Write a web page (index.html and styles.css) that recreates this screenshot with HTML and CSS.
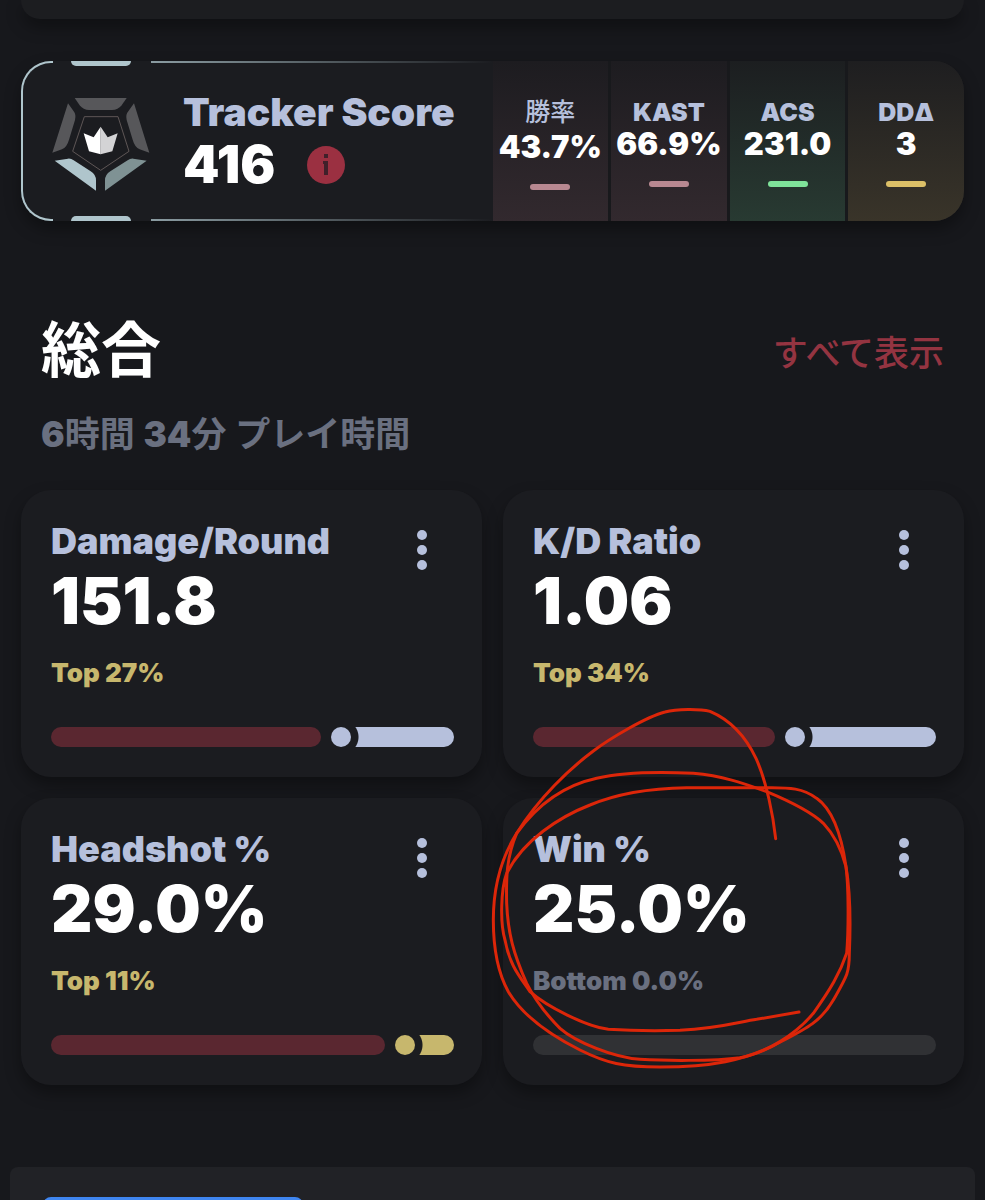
FILE: index.html
```
<!DOCTYPE html>
<html lang="ja">
<head>
    <meta charset="UTF-8">
    <meta name="viewport" content="width=device-width, initial-scale=1.0">
    <title>Tracker Score</title>
    <link rel="stylesheet" href="styles.css">
</head>
<body>
    <main class="page">
        <div class="previous-card"></div>

        <!-- Tracker Score -->
        <section class="score-card">
            <span class="tab tab-top"></span>
            <span class="tab tab-bottom"></span>
            <div class="score-main">
                <svg class="emblem" viewBox="36 38 294 282" aria-hidden="true">
                    <path d="M104 41H260L245 63Q234 77 216 77H147Q130 77 119 63Z" fill="#57575a"/>
                    <path d="M84 57L101 81Q109 91 105 107L87 166Q81 188 66 195L37 205Z" fill="#57575a"/>
                    <path d="M282 57L265 81Q256 91 260 107L278 166Q284 188 299 195L328 205Z" fill="#57575a"/>
                    <path d="M44 229L84 223Q93 222 101 228L152 261Q168 271 168 288V319Z" fill="#afc5cc"/>
                    <path d="M320 229L280 223Q271 222 263 228L211 261Q195 271 195 288V319Z" fill="#7f9294"/>
                    <path d="M133 97H234L267 201L182 258L98 201Z" fill="none" stroke="#5e5656" stroke-width="3"/>
                    <path d="M182 127L161 159L131 147L147 201L182 210Z" fill="#fff"/>
                    <path d="M182 127L203 159L233 147L217 201L182 210Z" fill="#d3d3d5"/>
                </svg>
                <div class="score-text">
                    <h2>Tracker Score</h2>
                    <div class="score-row">
                        <strong>416</strong>
                        <button class="info-btn" aria-label="Info">
                            <svg viewBox="0 0 38 38" aria-hidden="true">
                                <path d="M17 8H21V12H17ZM16 15H21V29H17V18H16Z" fill="#40202a"/>
                            </svg>
                        </button>
                    </div>
                </div>
            </div>
            <div class="score-stats">
                <div class="stat stat-red">
                    <span class="stat-label stat-label-ja">勝率</span>
                    <span class="stat-value">43.7%</span>
                    <span class="dash"></span>
                </div>
                <div class="stat stat-red">
                    <span class="stat-label">KAST</span>
                    <span class="stat-value">66.9%</span>
                    <span class="dash"></span>
                </div>
                <div class="stat stat-green">
                    <span class="stat-label">ACS</span>
                    <span class="stat-value">231.0</span>
                    <span class="dash"></span>
                </div>
                <div class="stat stat-yellow">
                    <span class="stat-label">DDΔ</span>
                    <span class="stat-value">3</span>
                    <span class="dash"></span>
                </div>
            </div>
        </section>

        <!-- Overview -->
        <header class="section-header">
            <h1>総合</h1>
            <a href="#">すべて表示</a>
        </header>
        <p class="playtime"><b>6</b>時間 <b>34</b>分 プレイ時間</p>

        <section class="cards">
            <article class="card">
                <button class="menu-btn" aria-label="Menu"><i></i><i></i><i></i></button>
                <h3>Damage/Round</h3>
                <div class="value">151.8</div>
                <div class="rank">Top 27%</div>
                <div class="bar">
                    <span class="fill" style="width: 67%"></span>
                    <span class="dot"></span>
                    <span class="rest"></span>
                </div>
            </article>
            <article class="card">
                <button class="menu-btn" aria-label="Menu"><i></i><i></i><i></i></button>
                <h3>K/D Ratio</h3>
                <div class="value">1.06</div>
                <div class="rank">Top 34%</div>
                <div class="bar">
                    <span class="fill" style="width: 60%"></span>
                    <span class="dot"></span>
                    <span class="rest"></span>
                </div>
            </article>
            <article class="card">
                <button class="menu-btn" aria-label="Menu"><i></i><i></i><i></i></button>
                <h3>Headshot %</h3>
                <div class="value">29.0%</div>
                <div class="rank">Top 11%</div>
                <div class="bar bar-gold">
                    <span class="fill" style="width: 83%"></span>
                    <span class="dot"></span>
                    <span class="rest"></span>
                </div>
            </article>
            <article class="card">
                <button class="menu-btn" aria-label="Menu"><i></i><i></i><i></i></button>
                <h3>Win %</h3>
                <div class="value">25.0%</div>
                <div class="rank rank-low">Bottom 0.0%</div>
                <div class="bar bar-empty"></div>
                <!-- Hand-drawn circle -->
                <svg class="scribble" viewBox="0 0 1200 1200" aria-hidden="true">
                    <path d="M887 446C880 380 860 275 828 205C790 125 735 83 690 64C660 56 590 56 555 66C500 80 390 145 340 183C270 235 175 325 110 430C60 510 40 600 40 690C40 800 60 860 85 905C130 980 220 1040 300 1080C380 1120 430 1131 540 1131C700 1131 790 1110 880 1067C970 1020 1020 1000 1060 930C1100 860 1108 850 1108 790C1112 700 1110 600 1098 530C1085 440 1060 360 1010 325C970 295 930 292 860 293H620C500 295 400 315 330 345C240 380 130 450 80 550C62 600 60 700 75 750C90 830 120 860 150 905C200 950 320 1010 385 1018C450 1022 560 1022 600 1021C720 1015 780 995 830 988L957 966"/>
                    <path d="M110 430C190 320 280 280 350 265C430 246 550 246 640 250C730 258 790 280 860 305C920 330 990 362 1030 400C1065 437 1085 480 1098 530C1106 590 1106 720 1100 790C1080 850 1050 900 1000 970C950 1030 860 1090 780 1103C700 1114 550 1112 480 1108C400 1102 285 1055 240 1015C195 970 165 930 140 880C100 790 84 730 80 640C78 560 80 500 110 430"/>
                </svg>
            </article>
        </section>

        <section class="next-panel">
            <button class="blue-btn" aria-label="Next"></button>
        </section>
    </main>
</body>
</html>
```
FILE: styles.css
```
* {
    box-sizing: border-box;
}

body {
    margin: 0;
    background-color: #17181c;
    color: #fff;
    font-family: Inter, "Noto Sans CJK JP", sans-serif;
    font-weight: 900;
}

h1, h2, h3, p {
    margin: 0;
}

button {
    border: none;
    padding: 0;
    background: none;
    cursor: pointer;
}

.page {
    height: 100vh;
    overflow: hidden;
    padding: 0 21px;
}

.previous-card {
    height: 19px;
    border-radius: 0 0 30px 30px;
    background-color: #1c1d20;
    box-shadow: 0 8px 16px rgba(0, 0, 0, 0.35);
}

/* Score card */
.score-card {
    position: relative;
    display: flex;
    margin-top: 42px;
    min-height: 160px;
    border-radius: 30px;
    background-color: #1b1c20;
    box-shadow: 0 8px 16px rgba(0, 0, 0, 0.35);
}

.score-card::before {
    content: "";
    position: absolute;
    left: 0;
    top: 0;
    bottom: 0;
    width: 30px;
    border: 2px solid #afc5cc;
    border-right: none;
    border-radius: 30px 0 0 30px;
}

.tab {
    position: absolute;
    left: 50px;
    width: 60px;
    height: 5px;
    background-color: #afc5cc;
}

.tab-top {
    top: 0;
    border-radius: 0 0 5px 5px;
}

.tab-bottom {
    bottom: 0;
    border-radius: 5px 5px 0 0;
}

.score-main {
    position: relative;
    flex: 1;
    display: flex;
    align-items: center;
    gap: 33px;
    padding-left: 31px;
}

.score-main::before,
.score-main::after {
    content: "";
    position: absolute;
    left: 130px;
    right: 0;
    height: 2px;
    background: linear-gradient(to right, #8b9ca2, transparent);
}

.score-main::before {
    top: 0;
}

.score-main::after {
    bottom: 0;
}

.emblem {
    width: 98px;
    height: 94px;
    margin-top: 6px;
}

.score-text h2 {
    color: #b6c0dc;
    font-size: 39px;
    font-weight: 900;
    line-height: 48px;
    white-space: nowrap;
}

.score-row {
    display: flex;
    align-items: center;
    gap: 32px;
}

.score-row strong {
    font-size: 52px;
    font-weight: 900;
    line-height: 58px;
}

.info-btn {
    width: 38px;
    height: 38px;
    border-radius: 50%;
    background-color: #9b3041;
}

.info-btn svg {
    display: block;
}

.score-stats {
    display: flex;
    gap: 3px;
    width: 50%;
    border-radius: 0 30px 30px 0;
    background-color: #18191c;
    overflow: hidden;
}

.stat {
    flex: 1;
    display: flex;
    flex-direction: column;
    align-items: center;
    padding-top: 36px;
}

.stat-red {
    background: linear-gradient(#1d1c20, #32292e);
    color: #b88891;
}

.stat-green {
    background: linear-gradient(#1c1e20, #283a32);
    color: #7fe39a;
}

.stat-yellow {
    background: linear-gradient(#1e1e20, #393429);
    color: #dcc067;
}

.stat-label {
    color: #b6c0dc;
    font-size: 25px;
    line-height: 30px;
}

.stat-label-ja {
    font-weight: 500;
    padding-bottom: 3px;
}

.stat-value {
    color: #fff;
    font-size: 31px;
    line-height: 34px;
}

.dash {
    width: 40px;
    height: 6px;
    margin-top: 20px;
    border-radius: 3px;
    background-color: currentColor;
}

/* Section header */
.section-header {
    display: flex;
    justify-content: space-between;
    align-items: center;
    margin-top: 85px;
    padding: 0 20px;
}

.section-header h1 {
    font-size: 60px;
    font-weight: 700;
    line-height: 88px;
}

.section-header a {
    color: #943441;
    font-size: 35px;
    font-weight: 500;
    text-decoration: none;
}

.playtime {
    margin-top: 14px;
    padding: 0 20px;
    color: #6a7080;
    font-size: 35px;
    font-weight: 600;
    line-height: 52px;
}

.playtime b {
    font-weight: 900;
}

/* Cards */
.cards {
    display: grid;
    grid-template-columns: 1fr 1fr;
    gap: 21px;
    margin-top: 30px;
}

.card {
    position: relative;
    padding: 30px 28px 30px 30px;
    border-radius: 30px;
    background-color: #1b1c20;
    box-shadow: 0 8px 16px rgba(0, 0, 0, 0.35);
}

.card h3 {
    color: #b6c0dc;
    font-size: 36px;
    font-weight: 900;
    line-height: 42px;
}

.value {
    font-size: 64px;
    line-height: 78px;
}

.rank {
    margin-top: 16px;
    color: #c7b76d;
    font-size: 26px;
    line-height: 34px;
}

.rank-low {
    color: #6a7080;
}

.menu-btn {
    position: absolute;
    top: 40px;
    right: 55px;
    display: flex;
    flex-direction: column;
    gap: 5px;
}

.menu-btn i {
    width: 10px;
    height: 10px;
    border-radius: 50%;
    background-color: #b6c0dc;
}

.bar {
    display: flex;
    height: 20px;
    margin-top: 37px;
    color: #b6c0dc;
}

.bar-gold {
    color: #c7b76d;
}

.bar-empty {
    border-radius: 10px;
    background-color: #303134;
}

.fill {
    border-radius: 10px;
    background-color: #5a2730;
}

.dot {
    width: 20px;
    margin-left: 10px;
    border-radius: 50%;
    background-color: currentColor;
}

/* the left end is cut out around the dot */
.rest {
    flex: 1;
    border-radius: 0 10px 10px 0;
    background: radial-gradient(circle at -10px 50%, transparent 17px, currentColor 18px);
}

.scribble {
    position: absolute;
    left: -23px;
    top: -108px;
    width: 400px;
    height: 400px;
    fill: none;
    stroke: #dc2609;
    stroke-width: 9;
    stroke-linecap: round;
    pointer-events: none;
}

/* Next panel */
.next-panel {
    margin: 82px -11px 0;
    padding: 30px 33px;
    border-radius: 8px;
    background-color: #212226;
}

.blue-btn {
    display: block;
    width: 260px;
    height: 60px;
    border-radius: 8px;
    background-color: #3f86f0;
}
```
